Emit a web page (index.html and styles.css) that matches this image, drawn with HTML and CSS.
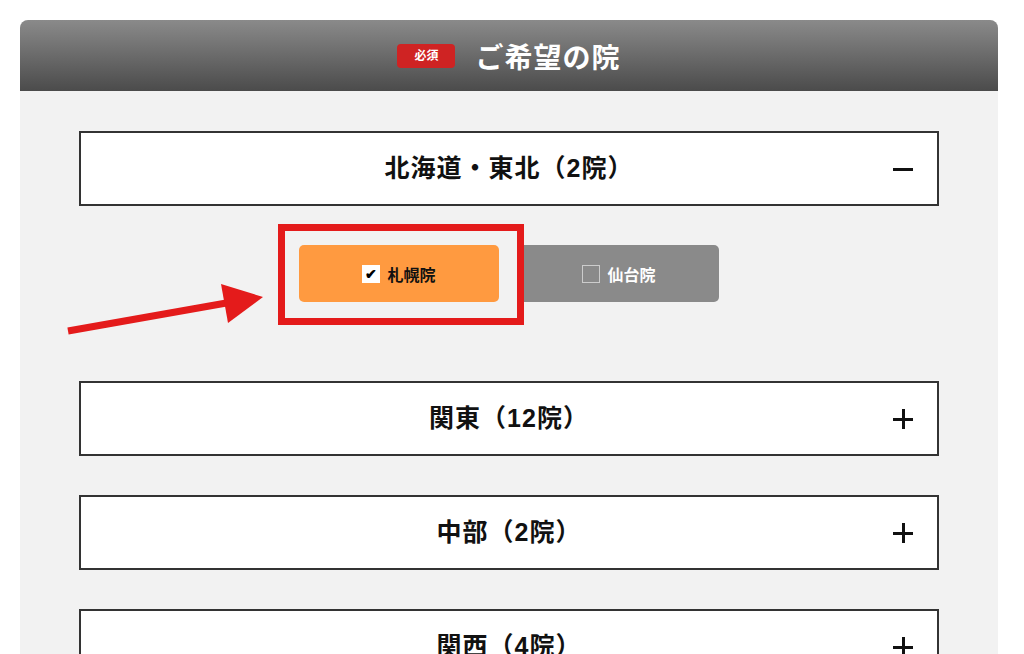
FILE: index.html
```html
<!DOCTYPE html>
<html lang="ja">
<head>
    <meta charset="UTF-8">
    <title>ご希望の院</title>
    <link rel="stylesheet" href="styles.css">
</head>
<body>
    <div class="panel">
        <div class="panel-head">
            <span class="badge">必須</span>
            <h2>ご希望の院</h2>
        </div>

        <div class="panel-body">
            <div class="area">
                <div class="area-title open">北海道・東北（2院）<span class="toggle"></span></div>
                <div class="clinics">
                    <div class="clinic checked"><span class="box">✔</span>札幌院</div>
                    <div class="clinic"><span class="box"></span>仙台院</div>
                    <div class="mark"></div>
                </div>
            </div>

            <div class="area">
                <div class="area-title">関東（12院）<span class="toggle"></span></div>
            </div>

            <div class="area">
                <div class="area-title">中部（2院）<span class="toggle"></span></div>
            </div>

            <div class="area">
                <div class="area-title">関西（4院）<span class="toggle"></span></div>
            </div>

            <svg class="arrow" width="220" height="60" viewBox="0 0 220 60">
                <line x1="8" y1="53" x2="172" y2="24" stroke="#e41b1b" stroke-width="7"/>
                <polygon points="161,6 203,19 168,45" fill="#e41b1b"/>
            </svg>
        </div>
    </div>
</body>
</html>
```

FILE: styles.css
```css
body {
    margin: 0;
    background-color: #fff;
    font-family: 'Liberation Sans', 'Noto Sans CJK JP', sans-serif;
    color: #111;
}

.panel {
    margin: 20px 26px 0 20px;
    background-color: #f2f2f2;
    border-radius: 8px 8px 0 0;
    overflow: hidden;
}

.panel-head {
    height: 71px;
    background: linear-gradient(#8a8a8a, #4b4b4b);
    display: flex;
    align-items: center;
    justify-content: center;
    gap: 20px;
}

.panel-head h2 {
    margin: 0;
    color: #fff;
    font-size: 28px;
    font-weight: bold;
    letter-spacing: 1px;
}

.badge {
    background-color: #cf2323;
    color: #fff;
    font-size: 12px;
    font-weight: bold;
    border-radius: 4px;
    width: 58px;
    height: 24px;
    line-height: 24px;
    text-align: center;
}

.panel-body {
    position: relative;
    padding: 40px 59px 0;
}

.area {
    margin-bottom: 39px;
}

.area-title {
    position: relative;
    height: 65px;
    padding-bottom: 6px;
    background-color: #fff;
    border: 2px solid #333;
    display: flex;
    align-items: center;
    justify-content: center;
    font-size: 25px;
    font-weight: bold;
    letter-spacing: 1px;
}

.toggle {
    position: absolute;
    right: 24px;
    top: 50%;
    width: 20px;
    height: 20px;
    margin-top: -10px;
}

.toggle::before,
.toggle::after {
    content: '';
    position: absolute;
    background-color: #111;
}

.toggle::before {
    left: 0;
    top: 9px;
    width: 20px;
    height: 3px;
}

.toggle::after {
    left: 9px;
    top: 0;
    width: 3px;
    height: 20px;
}

.open .toggle::after {
    display: none;
}

.clinics {
    position: relative;
    display: flex;
    justify-content: center;
    gap: 20px;
    margin-top: 39px;
    margin-bottom: 79px;
}

.clinic {
    width: 200px;
    height: 57px;
    border-radius: 5px;
    background-color: #8a8a8a;
    color: #fff;
    font-size: 16px;
    font-weight: bold;
    display: flex;
    align-items: center;
    justify-content: center;
    gap: 7px;
}

.clinic.checked {
    background-color: #ff9a40;
    color: #111;
}

.box {
    width: 16px;
    height: 16px;
    border: 1px solid #ccc;
    font-size: 14px;
    line-height: 16px;
    text-align: center;
}

.checked .box {
    width: 18px;
    height: 18px;
    border: none;
    background-color: #fff;
    color: #000;
    line-height: 18px;
}

.mark {
    position: absolute;
    left: 199px;
    top: -21px;
    width: 232px;
    height: 87px;
    border: 7px solid #e41b1b;
}

.arrow {
    position: absolute;
    left: 40px;
    top: 187px;
}
```
